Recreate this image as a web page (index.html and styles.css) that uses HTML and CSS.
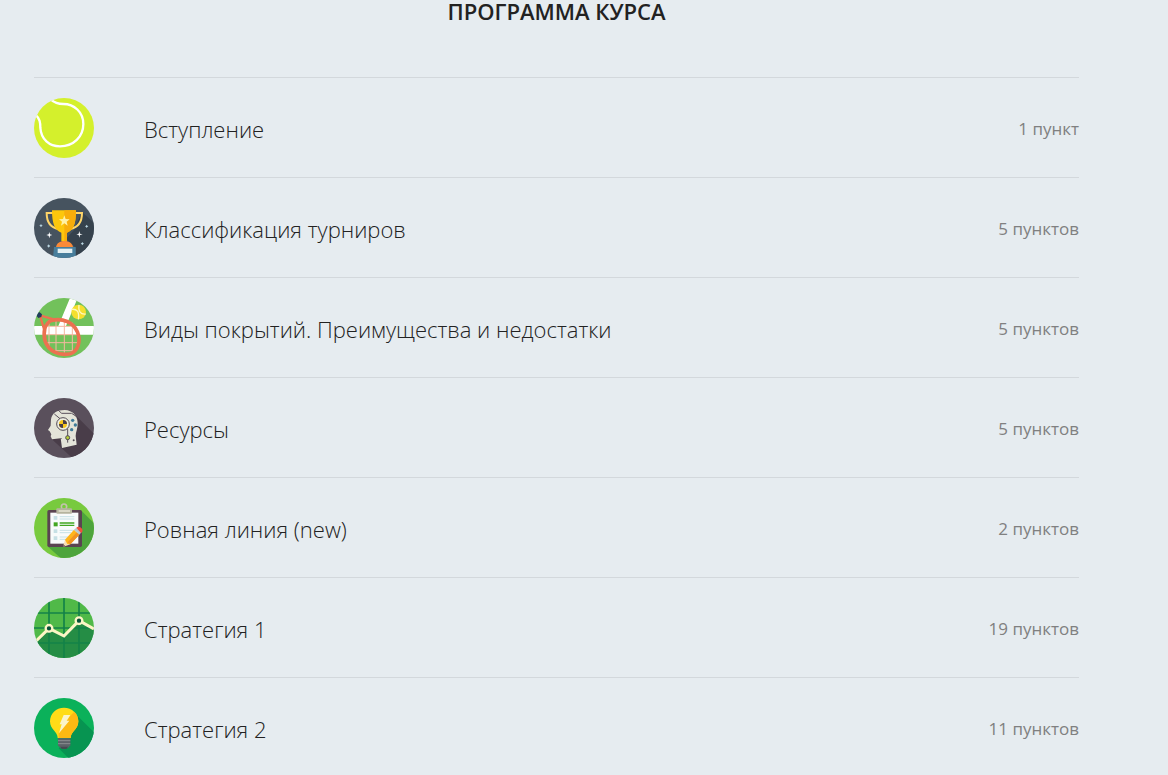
FILE: index.html
```html
<!DOCTYPE html>
<html lang="ru">
<head>
    <meta charset="UTF-8">
    <meta name="viewport" content="width=device-width, initial-scale=1.0">
    <title>Программа курса</title>
    <link rel="stylesheet" href="styles.css">
</head>
<body>
    <main class="program">
        <h1 class="program-title">Программа курса</h1>
        <ul class="lessons">
            <li class="lesson">
                <!-- tennis ball -->
                <svg class="lesson-icon" viewBox="30 30 180 180" aria-hidden="true">
                    <rect x="30" y="30" width="180" height="180" fill="#d4f02c"/>
                    <path d="M80 34C91 44 101 48 118 48C150 48 178 72 178 108C178 146 149 175 108 175C76 175 51 154 49 119C49 104 48 92 34 80" fill="none" stroke="#fff" stroke-width="7"/>
                </svg>
                <h2 class="lesson-name">Вступление</h2>
                <span class="lesson-count">1 пункт</span>
            </li>
            <li class="lesson">
                <!-- trophy -->
                <svg class="lesson-icon" viewBox="30 30 180 180" aria-hidden="true">
                    <rect x="30" y="30" width="180" height="180" fill="#46535f"/>
                    <path d="M174 72L210 105V210H156V180L126 152L150 126Z" fill="#36424d"/>
                    <path d="M88 75H68C68 106 81 119 103 123M152 75H174C174 106 161 119 138 123" fill="none" stroke="#ffd569" stroke-width="6"/>
                    <path d="M84 67H156C156 107 149 127 129 134V160H112V134C92 127 84 107 84 67Z" fill="#fdc70c"/>
                    <path d="M121 67H156C156 107 149 127 129 134V160H121Z" fill="#f8ad0b"/>
                    <path d="M121 82L125 93L137 94L128 101L131 113L121 106L111 113L114 101L105 94L117 93Z" fill="#fff1a5"/>
                    <path d="M96 178C97 166 108 159 121 159C136 159 146 167 147 178Z" fill="#fa8a38"/>
                    <path d="M90 177H155V210H87Z" fill="#477d9b"/>
                    <rect x="101" y="182" width="44" height="13" fill="#e4f0f2"/>
                    <path d="M76 132L78 139L85 141L78 143L76 151L74 143L67 141L74 139ZM166 129L168 137L176 139L168 141L166 149L164 141L157 139L164 137Z" fill="#fff"/>
                    <path d="M51 108L53 111L56 113L53 115L51 118L49 115L46 113L49 111ZM188 110L190 113L193 115L190 117L188 120L186 117L183 115L186 113ZM74 169L76 172L79 174L76 176L74 179L72 176L69 174L72 172ZM175 162L177 165L180 167L177 169L175 172L173 169L170 167L173 165Z" fill="#b9d5e0"/>
                </svg>
                <h2 class="lesson-name">Классификация турниров</h2>
                <span class="lesson-count">5 пунктов</span>
            </li>
            <li class="lesson">
                <!-- court, racket and ball -->
                <svg class="lesson-icon" viewBox="30 30 180 180" aria-hidden="true">
                    <rect x="30" y="30" width="180" height="180" fill="#72c15b"/>
                    <path d="M30 114H103L138 30H161L126 114H210V140H30Z" fill="#fff"/>
                    <path d="M75 96V180M96 92V192M121 94V194M145 104V192M65 115H154M60 140H168M66 164H166M84 188H154" fill="none" stroke="#f5b7a0" stroke-width="3"/>
                    <path d="M83 97C117 90 147 102 160 131C171 159 163 189 139 197C106 205 73 190 63 158C57 133 61 106 83 97Z" fill="none" stroke="#ec7150" stroke-width="11"/>
                    <path d="M48 82L92 95M48 82L62 130" fill="none" stroke="#ec7150" stroke-width="7"/>
                    <path d="M38 76L46 72L54 79L52 87L43 90L38 84Z" fill="#223d5f"/>
                    <circle cx="164" cy="72" r="22" fill="#f5df2d"/>
                    <path d="M143 64C158 62 167 71 163 94M165 51C162 70 170 80 185 78" fill="none" stroke="#fff8bd" stroke-width="4"/>
                </svg>
                <h2 class="lesson-name">Виды покрытий. Преимущества и недостатки</h2>
                <span class="lesson-count">5 пунктов</span>
            </li>
            <li class="lesson">
                <!-- robot head -->
                <svg class="lesson-icon" viewBox="30 30 180 180" aria-hidden="true">
                    <rect x="30" y="30" width="180" height="180" fill="#5a505c"/>
                    <path d="M151 78L210 137V210H145L82 152L120 142Z" fill="#493d49"/>
                    <path d="M81 94C84 75 99 66 122 66C146 67 160 83 161 104C162 120 155 132 155 144L158 170L114 180L110 151L84 154L80 145L82 139L77 130L72 126L80 113Z" fill="#e4e4d9"/>
                    <path d="M102 66L113 76H143L158 86M91 78L108 92M131 122V164M112 150L110 154" fill="none" stroke="#5a505c" stroke-width="3"/>
                    <circle cx="117" cy="108" r="19" fill="#eeeee2" stroke="#514953" stroke-width="3"/>
                    <circle cx="117" cy="108" r="12" fill="#f6c51b"/>
                    <path d="M117 108V96A12 12 0 0 1 129 108ZM117 108V120A12 12 0 0 1 105 108Z" fill="#493d49"/>
                    <circle cx="131" cy="149" r="6" fill="#b6cd38" stroke="#514953" stroke-width="3"/>
                    <g fill="#407c9a">
                        <circle cx="146" cy="97" r="5"/>
                        <circle cx="154" cy="111" r="5"/>
                        <circle cx="143" cy="125" r="5"/>
                    </g>
                    <circle cx="149" cy="157" r="3" fill="#514953"/>
                </svg>
                <h2 class="lesson-name">Ресурсы</h2>
                <span class="lesson-count">5 пунктов</span>
            </li>
            <li class="lesson">
                <!-- clipboard and pencil -->
                <svg class="lesson-icon" viewBox="30 30 180 180" aria-hidden="true">
                    <rect x="30" y="30" width="180" height="180" fill="#78ca3e"/>
                    <path d="M173 69L210 106V210H110L72 176Z" fill="#4da43c"/>
                    <rect x="70" y="66" width="104" height="111" rx="5" fill="#5a4451"/>
                    <rect x="79" y="74" width="84" height="93" fill="#f8fbfb"/>
                    <circle cx="120" cy="56" r="8" fill="none" stroke="#c4c2ad" stroke-width="5"/>
                    <rect x="97" y="61" width="47" height="16" rx="3" fill="#b5b49e"/>
                    <rect x="104" y="66" width="34" height="6" fill="#dad8c6"/>
                    <path d="M89 84H100V95H89ZM89 124H100V135H89ZM89 145H100V156H89Z" fill="#c6e0e5"/>
                    <rect x="89" y="103" width="12" height="12" fill="#42a620"/>
                    <path d="M107 86H151M107 93H151M107 127H147M107 134H141M107 147H133M107 154H128" stroke="#c6e0e5" stroke-width="3"/>
                    <path d="M107 105H151M107 112H151" stroke="#42a620" stroke-width="4"/>
                    <path d="M117 177L123 155L139 169Z" fill="#f8dfb5"/>
                    <path d="M123 155L150 125L166 140L139 169L130 168Z" fill="#ffb51b"/>
                    <path d="M131 163L158 133L166 140L139 169Z" fill="#f19322"/>
                    <path d="M150 125L157 119L172 133L166 140Z" fill="#b9cbd0"/>
                    <path d="M157 119C162 113 170 117 174 122C178 128 174 133 171 135Z" fill="#f1503e"/>
                    <path d="M117 177L119 170L124 174Z" fill="#5a4451"/>
                </svg>
                <h2 class="lesson-name">Ровная линия (new)</h2>
                <span class="lesson-count">2 пунктов</span>
            </li>
            <li class="lesson">
                <!-- line chart -->
                <svg class="lesson-icon" viewBox="30 30 180 180" aria-hidden="true">
                    <rect x="30" y="30" width="180" height="180" fill="#50b948"/>
                    <path d="M30 165L75 121L120 144L165 98L210 123V210H30Z" fill="#258d45"/>
                    <path d="M75 30V210M120 30V210M165 30V210M30 75H210M30 120H210M30 165H210" stroke="#138248" stroke-width="5"/>
                    <path d="M30 165L75 121L120 144L165 98L210 123" fill="none" stroke="#fcf6c6" stroke-width="9"/>
                    <g fill="#07513a" stroke="#fcf6c6" stroke-width="7">
                        <circle cx="75" cy="121" r="10"/>
                        <circle cx="165" cy="98" r="10"/>
                    </g>
                </svg>
                <h2 class="lesson-name">Стратегия 1</h2>
                <span class="lesson-count">19 пунктов</span>
            </li>
            <li class="lesson">
                <!-- light bulb -->
                <svg class="lesson-icon" viewBox="30 30 180 180" aria-hidden="true">
                    <rect x="30" y="30" width="180" height="180" fill="#0bb15a"/>
                    <path d="M154 77L210 133V210H133L104 181L139 149Z" fill="#079451"/>
                    <path d="M101 150C101 130 78 126 78 100C78 77 96 59 120 59C144 59 163 77 163 100C163 126 140 130 140 150Z" fill="#ffdc17"/>
                    <path d="M138 84L151 71C159 79 163 88 163 100C163 126 140 130 140 150H104V136Z" fill="#fdb913"/>
                    <path d="M119 81H139L128 98H136L105 136L113 109H107Z" fill="#fbf4c9"/>
                    <path d="M102 151H139V172L132 180H109L102 172Z" fill="#5c6268"/>
                    <path d="M102 158H139M102 167H139" stroke="#8b8f91" stroke-width="3"/>
                    <path d="M109 176H132L128 183H113Z" fill="#454b51"/>
                </svg>
                <h2 class="lesson-name">Стратегия 2</h2>
                <span class="lesson-count">11 пунктов</span>
            </li>
        </ul>
    </main>
</body>
</html>
```

FILE: styles.css
```css
body {
    margin: 0;
    background-color: #e6ecf0;
    font-family: 'Open Sans', 'Noto Sans', sans-serif;
    color: #222;
}
.program {
    padding: 0 89px 0 34px;
}
.program-title {
    margin: 0;
    padding-bottom: 55px;
    font-size: 22px;
    font-weight: 600;
    line-height: 22px;
    text-align: center;
    text-transform: uppercase;
}
.lessons {
    margin: 0;
    padding: 0;
    list-style: none;
}
.lesson {
    display: flex;
    align-items: center;
    padding: 20px 0 19px;
    border-top: 1px solid #d3d8dc;
}
.lesson-icon {
    flex: none;
    width: 60px;
    height: 60px;
    margin-right: 50px;
    border-radius: 50%;
}
.lesson-name {
    flex: 1;
    margin: 0;
    padding-top: 2px;
    font-size: 22px;
    font-weight: 300;
    line-height: 30px;
}
.lesson-count {
    padding-top: 2px;
    font-size: 17px;
    line-height: 24px;
    color: #808080;
}
```
